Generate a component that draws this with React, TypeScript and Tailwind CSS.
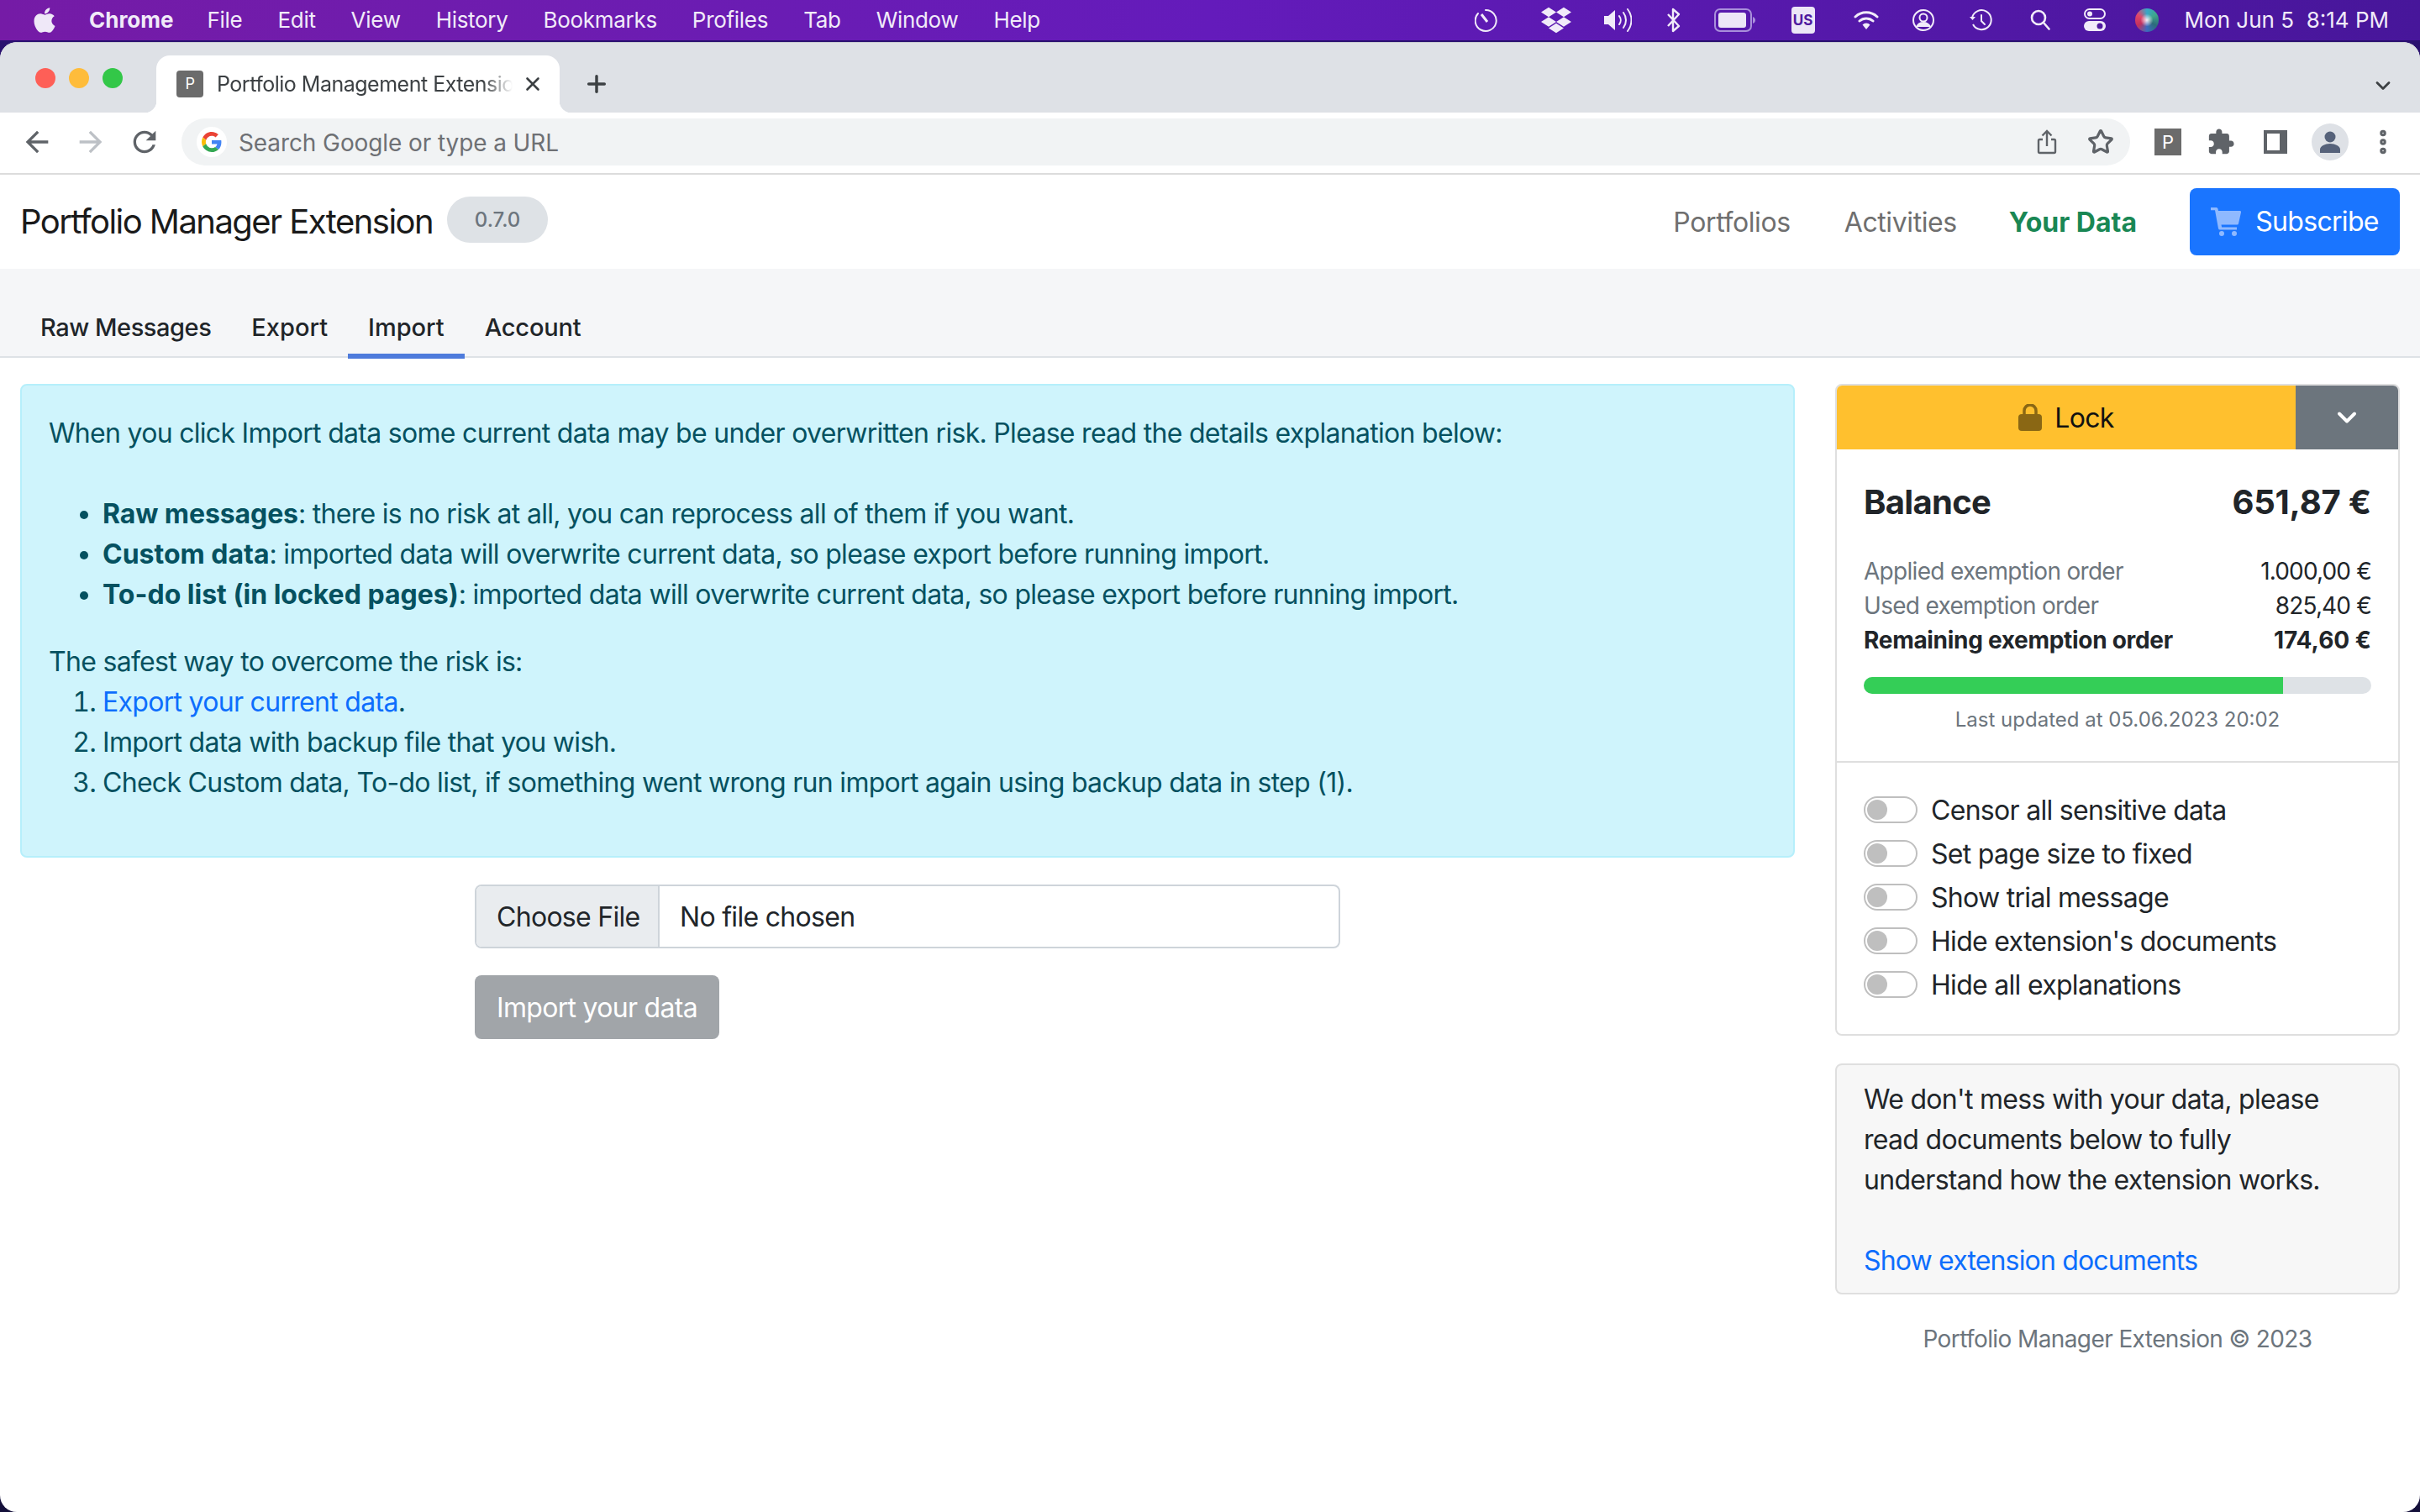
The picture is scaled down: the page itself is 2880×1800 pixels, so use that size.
import { FaApple, FaDropbox } from "react-icons/fa";
import { ChevronDown, EllipsisVertical, Plus, Star, X } from "lucide-react";

const menuItems = ["File", "Edit", "View", "History", "Bookmarks", "Profiles", "Tab", "Window", "Help"];
const toggles = [
  "Censor all sensitive data",
  "Set page size to fixed",
  "Show trial message",
  "Hide extension's documents",
  "Hide all explanations",
];

function MenuBar() {
  return (
    <div className="flex h-[50px] items-center border-b-2 border-[#2a1070] bg-gradient-to-r from-[#751ba6] via-[#641bbb] to-[#47169a] text-[26px] tracking-[-0.3px] text-[#f1ebf9]">
      <FaApple className="ml-[36px] h-[34px] w-[34px] text-[#efe8f8]" />
      <span className="ml-[36px] font-bold tracking-normal">Chrome</span>
      <div className="ml-[40px] flex gap-[42px]">
        {menuItems.map((item) => (
          <span key={item}>{item}</span>
        ))}
      </div>
      <div className="ml-auto flex items-center pr-[37px]">
        <div className="flex w-[82px] justify-center">
          <svg width="30" height="32" viewBox="0 0 28 32" fill="none" stroke="currentColor" strokeWidth="2">
            <path d="M12 4a12.5 12.5 0 1 1-9 4" strokeLinecap="round" />
            <path d="M7 9l7 9" strokeWidth="3" />
          </svg>
        </div>
        <div className="flex w-[82px] justify-center">
          <FaDropbox className="h-[36px] w-[36px]" />
        </div>
        <div className="flex w-[64px] justify-center">
          <svg width="34" height="28" viewBox="0 0 34 28" fill="none" stroke="currentColor" strokeWidth="2">
            <path d="M1 9h5l8-7v24l-8-7H1z" fill="currentColor" stroke="none" />
            <path d="M19 9a8 8 0 0 1 0 10M24 5a15 15 0 0 1 0 18M29 1a21 21 0 0 1 0 26" strokeLinecap="round" />
          </svg>
        </div>
        <div className="flex w-[70px] justify-center">
          <svg width="16" height="30" viewBox="0 0 16 30" fill="none" stroke="currentColor" strokeWidth="2.4">
            <path d="M1 8l13 14-7 6V2l7 6L1 22" strokeLinejoin="round" />
          </svg>
        </div>
        <div className="flex w-[76px] justify-center">
          <svg width="50" height="28" viewBox="0 0 50 28">
            <rect x="1" y="1" width="43" height="26" rx="6" fill="none" stroke="#a98fdb" strokeWidth="2" />
            <rect x="5" y="5" width="33" height="18" rx="3" fill="#ece6f7" />
            <path d="M46 10c2 1 3 2 3 4s-1 3-3 4z" fill="#a98fdb" />
          </svg>
        </div>
        <div className="flex w-[86px] justify-center">
          <div className="flex h-[32px] w-[28px] items-center justify-center rounded-[4px] bg-[#ece6f7] text-[17px] font-bold tracking-normal text-[#4f1a9f]">
            US
          </div>
        </div>
        <div className="flex w-[64px] justify-center">
          <svg width="30" height="26" viewBox="0 0 30 26" fill="none" stroke="currentColor" strokeWidth="3">
            <path d="M2 9a19 19 0 0 1 26 0M7 14a12 12 0 0 1 16 0" strokeLinecap="round" />
            <path d="M10.5 18.5a6 6 0 0 1 9 0L15 24z" fill="currentColor" stroke="none" />
          </svg>
        </div>
        <div className="flex w-[72px] justify-center">
          <svg width="26" height="26" viewBox="0 0 26 26" fill="none" stroke="currentColor" strokeWidth="2">
            <circle cx="13" cy="13" r="12" />
            <circle cx="13" cy="10" r="4.5" />
            <path d="M5 21c2-4 5-5 8-5s6 1 8 5" fill="currentColor" />
          </svg>
        </div>
        <div className="flex w-[64px] justify-center">
          <svg width="28" height="26" viewBox="0 0 28 26" fill="none" stroke="currentColor" strokeWidth="2">
            <path d="M4 10a11.5 11.5 0 1 1 1 8" />
            <path d="M1 9l3.5 4L8 9" fill="currentColor" stroke="none" />
            <path d="M15 7v7l4 4" strokeLinecap="round" />
          </svg>
        </div>
        <div className="flex w-[78px] justify-center">
          <svg width="24" height="26" viewBox="0 0 24 26" fill="none" stroke="currentColor" strokeWidth="2.6">
            <circle cx="10" cy="10" r="8" />
            <path d="M16 16l6.5 7.5" strokeLinecap="round" />
          </svg>
        </div>
        <div className="flex w-[52px] justify-center">
          <svg width="26" height="28" viewBox="0 0 26 28">
            <rect x="1" y="1" width="24" height="11" rx="5.5" fill="none" stroke="currentColor" strokeWidth="2" />
            <circle cx="7" cy="6.5" r="3" fill="currentColor" />
            <rect y="15" width="26" height="12" rx="6" fill="currentColor" />
            <circle cx="19" cy="21" r="3.5" fill="#4f1a9f" />
          </svg>
        </div>
        <div className="flex w-[72px] justify-center">
          <div className="h-[28px] w-[28px] rounded-full bg-[radial-gradient(circle,#f5eef8_0%,transparent_38%),conic-gradient(#38a8c8,#3fa68a,#2c6b7a,#3c6bc0,#c2305e,#e0476a,#38a8c8)]" />
        </div>
        <span className="ml-[9px] whitespace-pre tracking-normal">Mon Jun 5  8:14 PM</span>
      </div>
    </div>
  );
}

function TabStrip() {
  return (
    <div className="flex h-[84px] items-start rounded-t-[20px] border-t border-[#c9ccd2] bg-[#dee1e6]">
      <div className="ml-[42px] mt-[30px] flex gap-[16px]">
        <span className="h-[24px] w-[24px] rounded-full bg-[#fe5f57]" />
        <span className="h-[24px] w-[24px] rounded-full bg-[#febc3b]" />
        <span className="h-[24px] w-[24px] rounded-full bg-[#33c748]" />
      </div>
      <div className="relative ml-[40px] mt-[15px] flex h-[68px] w-[480px] items-center rounded-t-[16px] bg-white pl-[24px] before:absolute before:bottom-0 before:-left-[14px] before:h-[14px] before:w-[14px] before:bg-[radial-gradient(circle_at_0_0,#dee1e6_14px,white_14.5px)] after:absolute after:bottom-0 after:-right-[14px] after:h-[14px] after:w-[14px] after:bg-[radial-gradient(circle_at_100%_0,#dee1e6_14px,white_14.5px)]">
        <div className="flex h-[32px] w-[32px] items-center justify-center rounded-[4px] bg-[#6b6b6b] text-[18px] text-white">
          P
        </div>
        <div className="ml-[16px] w-[352px] overflow-hidden whitespace-nowrap text-[25px] tracking-[-0.5px] text-[#3c4043] [mask-image:linear-gradient(to_right,black_90%,transparent)]">
          Portfolio Management Extension
        </div>
        <X className="ml-[11px] h-[26px] w-[26px] text-[#3c4043]" strokeWidth={2.4} />
      </div>
      <Plus className="ml-[28px] mt-[33px] h-[32px] w-[32px] text-[#3c4043]" strokeWidth={2.6} />
      <ChevronDown className="ml-auto mr-[30px] mt-[37px] h-[28px] w-[28px] text-[#3c4043]" strokeWidth={2.4} />
    </div>
  );
}

function Toolbar() {
  return (
    <div className="flex h-[74px] items-center border-b-2 border-[#dcdcdc] bg-white pb-[2px]">
      <div className="flex w-[216px] items-center gap-[24px] pl-[24px]">
        <svg width="40" height="40" viewBox="0 0 24 24" fill="#5f6368">
          <path d="M20 11H7.83l5.59-5.59L12 4l-8 8 8 8 1.41-1.41L7.83 13H20v-2z" />
        </svg>
        <svg width="40" height="40" viewBox="0 0 24 24" fill="#bdc1c6">
          <path d="M4 11h12.17l-5.59-5.59L12 4l8 8-8 8-1.41-1.41L16.17 13H4v-2z" />
        </svg>
        <svg width="40" height="40" viewBox="0 0 24 24" fill="#5f6368">
          <path d="M17.65 6.35C16.2 4.9 14.21 4 12 4c-4.42 0-7.99 3.58-7.99 8s3.57 8 7.99 8c3.73 0 6.84-2.55 7.73-6h-2.08c-.82 2.33-3.04 4-5.65 4-3.31 0-6-2.69-6-6s2.69-6 6-6c1.66 0 3.14.69 4.22 1.78L13 11h7V4l-2.35 2.35z" />
        </svg>
      </div>
      <div className="flex h-[56px] w-[2319px] items-center rounded-full bg-[#f1f3f4] pl-[18px] pr-[19px]">
        <div className="flex h-[36px] w-[36px] items-center justify-center rounded-full bg-white">
          <svg width="24" height="24" viewBox="0 0 48 48">
            <path fill="#EA4335" d="M24 9.5c3.5 0 6.7 1.3 9.1 3.5l6.8-6.8C35.8 2.4 30.2 0 24 0 14.6 0 6.5 5.4 2.6 13.2l7.9 6.2C12.4 13.7 17.7 9.5 24 9.5z" />
            <path fill="#4285F4" d="M46.9 24.5c0-1.6-.2-3.1-.4-4.5H24v9h12.9c-.6 3-2.2 5.5-4.7 7.2l7.7 6c4.5-4.1 7-10.2 7-17.7z" />
            <path fill="#FBBC05" d="M10.5 28.6c-.5-1.4-.8-3-.8-4.6s.3-3.2.8-4.6l-7.9-6.2C.9 16.5 0 20.1 0 24s.9 7.5 2.6 10.8l7.9-6.2z" />
            <path fill="#34A853" d="M24 48c6.5 0 11.9-2.1 15.9-5.8l-7.7-6c-2.2 1.4-4.9 2.3-8.2 2.3-6.3 0-11.6-4.2-13.5-10l-7.9 6.2C6.5 42.6 14.6 48 24 48z" />
          </svg>
        </div>
        <span className="ml-[14px] pt-[2px] text-[28px] tracking-[-0.1px] text-[#6e7074]">Search Google or type a URL</span>
        <svg className="ml-auto" width="28" height="32" viewBox="0 0 28 32" fill="none" stroke="#5f6368" strokeWidth="2.4">
          <path d="M9 13H5.5a1.5 1.5 0 0 0-1.5 1.5v13A1.5 1.5 0 0 0 5.5 29h17a1.5 1.5 0 0 0 1.5-1.5v-13a1.5 1.5 0 0 0-1.5-1.5H19" />
          <path d="M14 21V3M8.5 8.5L14 3l5.5 5.5" />
        </svg>
        <Star className="ml-[34px] h-[32px] w-[32px] text-[#5f6368]" strokeWidth={2.4} />
      </div>
      <div className="ml-[29px] flex h-[32px] w-[32px] items-center justify-center bg-[#6b6b6b] text-[22px] leading-none tracking-normal text-white">
        P
      </div>
      <svg className="ml-[30px]" width="34" height="34" viewBox="0 0 24 24" fill="#5f6368">
        <path d="M20.5 11H19V7c0-1.1-.9-2-2-2h-4V3.5C13 2.12 11.88 1 10.5 1S8 2.12 8 3.5V5H4c-1.1 0-1.99.9-1.99 2v3.8H3.5c1.49 0 2.7 1.21 2.7 2.7s-1.21 2.7-2.7 2.7H2V20c0 1.1.9 2 2 2h3.8v-1.5c0-1.49 1.21-2.7 2.7-2.7 1.49 0 2.7 1.21 2.7 2.7V22H17c1.1 0 2-.9 2-2v-4h1.5c1.38 0 2.5-1.12 2.5-2.5S21.88 11 20.5 11z" />
      </svg>
      <div className="ml-[34px] h-[28px] w-[28px] border-[4px] border-r-[9px] border-[#5f6368]" />
      <div className="ml-[29px] flex h-[44px] w-[44px] items-center justify-center rounded-full bg-[#dee1e6]">
        <svg width="24" height="26" viewBox="0 0 24 26" fill="#56627a">
          <circle cx="12" cy="7" r="6.5" />
          <path d="M0 26v-4c0-4 6-7 12-7s12 3 12 7v4z" />
        </svg>
      </div>
      <EllipsisVertical className="ml-[23px] h-[36px] w-[36px] text-[#5f6368]" strokeWidth={3} />
    </div>
  );
}

function Header() {
  return (
    <div className="flex h-[112px] items-center bg-white pl-[24px] pr-[24px]">
      <h1 className="text-[40px] tracking-[-1.55px] text-[#1a1a1a]">Portfolio Manager Extension</h1>
      <span className="mb-[5px] ml-[17px] flex h-[55px] w-[120px] items-center justify-center rounded-full bg-[#dee2e6] text-[24px] font-medium tracking-normal text-[#6c757d]">
        0.7.0
      </span>
      <nav className="ml-auto flex items-center pt-[2px] text-[32px] tracking-[-0.4px] text-[#6f6f6f]">
        <a>Portfolios</a>
        <a className="ml-[64px]">Activities</a>
        <a className="ml-[62px] font-bold tracking-normal text-[#198754]">Your Data</a>
      </nav>
      <button className="ml-[63px] flex h-[80px] w-[250px] items-center justify-center rounded-[8px] bg-[#1a75ff] text-[32px] text-white">
        <svg width="36" height="34" viewBox="0 0 36 34" className="mr-[17px]" fill="#8fb9ff">
          <path d="M0 0h6.5a2 2 0 0 1 2 1.6L9 4h25.5a1.5 1.5 0 0 1 1.5 1.8l-3 13.5a1.5 1.5 0 0 1-1.5 1.2H12.5l.6 3H31v3H11a2 2 0 0 1-2-1.6L5 3.2H0z" />
          <circle cx="13" cy="31" r="3" />
          <circle cx="28" cy="31" r="3" />
        </svg>
        Subscribe
      </button>
    </div>
  );
}

function Tabs() {
  return (
    <div className="flex h-[106px] items-end border-b-2 border-[#dee2e6] bg-[#f5f6f8] pl-[24px] text-[29px] font-medium tracking-normal text-[#212529]">
      <a className="h-[58px] px-[24px] tracking-[-0.45px]">Raw Messages</a>
      <a className="h-[58px] px-[24px]">Export</a>
      <a className="-mb-[3px] h-[61px] border-b-[6px] border-[#4e7bdc] px-[24px]">Import</a>
      <a className="h-[58px] px-[24px] tracking-[-0.2px]">Account</a>
    </div>
  );
}

function ImportAlert() {
  return (
    <div className="rounded-[8px] border-2 border-[#b6effb] bg-[#cff4fc] px-[32px] pb-[31px] pt-[33px] text-[#055160]">
      <p>When you click Import data some current data may be under overwritten risk. Please read the details explanation below:</p>
      <br />
      <ul className="mb-[32px] list-disc pl-[64px]">
        <li>
          <b className="tracking-[-0.1px]">Raw messages</b>: there is no risk at all, you can reprocess all of them if you want.
        </li>
        <li>
          <b className="tracking-normal">Custom data</b>: imported data will overwrite current data, so please export before running import.
        </li>
        <li>
          <b className="tracking-normal">To-do list (in locked pages)</b>: imported data will overwrite current data, so please export before running import.
        </li>
      </ul>
      <p>The safest way to overcome the risk is:</p>
      <ol className="mb-[32px] list-decimal pl-[64px]">
        <li>
          <a className="text-[#0d6efd]">Export your current data</a>.
        </li>
        <li>Import data with backup file that you wish.</li>
        <li>Check Custom data, To-do list, if something went wrong run import again using backup data in step (1).</li>
      </ol>
    </div>
  );
}

function ImportForm() {
  return (
    <div className="mx-auto mt-[32px] w-[1030px]">
      <div className="flex h-[76px] items-center overflow-hidden rounded-[8px] border-2 border-[#ced4da] bg-white pt-0 text-[#212529]">
        <div className="flex h-full w-[218px] items-center border-r-2 border-[#ced4da] bg-[#e9ecef] pl-[24px] pt-[1px]">Choose File</div>
        <span className="ml-[24px] pt-[1px]">No file chosen</span>
      </div>
      <button className="mt-[32px] flex h-[76px] w-[291px] items-center justify-center rounded-[8px] bg-[#a1a5a9] pt-[1px] text-white">
        Import your data
      </button>
    </div>
  );
}

function BalanceCard() {
  return (
    <div className="overflow-hidden rounded-[8px] border-2 border-[#dfdfdf] bg-white">
      <div className="flex h-[76px]">
        <div className="flex flex-1 items-center justify-center bg-[#ffc02e] pt-[2px] text-[#111]">
          <svg width="28" height="32" viewBox="0 0 28 32" className="mb-[2px] mr-[15px]">
            <path d="M7 14V8a7 7 0 0 1 14 0v6" fill="none" stroke="#8a6714" strokeWidth="3.5" />
            <rect y="12" width="28" height="20" rx="4" fill="#8a6714" />
          </svg>
          Lock
        </div>
        <div className="flex w-[122px] items-center justify-center bg-[#6c757d]">
          <ChevronDown className="h-[36px] w-[36px] text-white" strokeWidth={2.6} />
        </div>
      </div>
      <div className="border-b-2 border-[#dfdfdf] px-[32px] pb-[31px] pt-[33px]">
        <div className="flex items-center justify-between text-[40px] font-bold leading-[60px] text-[#212529]">
          <span className="tracking-[-0.7px]">Balance</span>
          <span className="tracking-[-0.2px]">651,87 €</span>
        </div>
        <div className="mt-[32px] text-[28px] leading-[41px] text-[#212529]">
          <div className="flex justify-between">
            <span className="tracking-[-0.7px] text-[#6c757d]">Applied exemption order</span>
            <span className="tracking-[-0.85px]">1.000,00 €</span>
          </div>
          <div className="flex justify-between">
            <span className="tracking-[-0.7px] text-[#6c757d]">Used exemption order</span>
            <span className="tracking-[-0.85px]">825,40 €</span>
          </div>
          <div className="flex justify-between font-bold">
            <span className="tracking-[-0.3px]">Remaining exemption order</span>
            <span className="tracking-normal">174,60 €</span>
          </div>
        </div>
        <div className="mt-[23px] h-[20px] overflow-hidden rounded-full bg-[#dee2e6]">
          <div className="h-full w-[82.6%] bg-[#34ce57]" />
        </div>
        <div className="mt-[13px] text-center text-[24px] leading-[36px] tracking-normal text-[#6c757d]">Last updated at 05.06.2023 20:02</div>
      </div>
      <div className="flex flex-col gap-[4px] px-[32px] pb-[35px] pt-[32px]">
        {toggles.map((label) => (
          <div key={label} className="flex h-[48px] items-center text-[#212529]">
            <span className="flex h-[32px] w-[64px] items-center rounded-full border-2 border-[#bfbfbf] bg-white pl-[2px]">
              <span className="h-[24px] w-[24px] rounded-full bg-[#bfbfbf]" />
            </span>
            <span className="ml-[16px] pt-[1px]">{label}</span>
          </div>
        ))}
      </div>
    </div>
  );
}

function DocsCard() {
  return (
    <div className="mt-[33px] rounded-[8px] border-2 border-[#dfdfdf] bg-[#f7f7f7] px-[32px] pb-[14px] pt-[17px] text-[#212529]">
      <p>We don't mess with your data, please read documents below to fully understand how the extension works.</p>
      <br />
      <a className="tracking-[-0.84px] text-[#0d6efd]">Show extension documents</a>
    </div>
  );
}

export default function App() {
  return (
    <div className="h-[1800px] w-[2880px] overflow-hidden bg-gradient-to-b from-[#2a1070] to-[#14103a] font-['Inter',sans-serif] text-[32px] leading-[48px] tracking-[-0.7px]">
      <MenuBar />
      <div className="h-[1750px] overflow-hidden rounded-[20px] bg-white">
        <TabStrip />
        <Toolbar />
        <Header />
        <Tabs />
        <div className="flex gap-[48px] px-[24px] pt-[31px]">
          <div className="w-[2112px]">
            <ImportAlert />
            <ImportForm />
          </div>
          <div className="w-[672px]">
            <BalanceCard />
            <DocsCard />
            <div className="mt-[32px] text-center text-[28px] leading-[42px] tracking-[-0.6px] text-[#6c757d]">Portfolio Manager Extension © 2023</div>
          </div>
        </div>
      </div>
    </div>
  );
}
